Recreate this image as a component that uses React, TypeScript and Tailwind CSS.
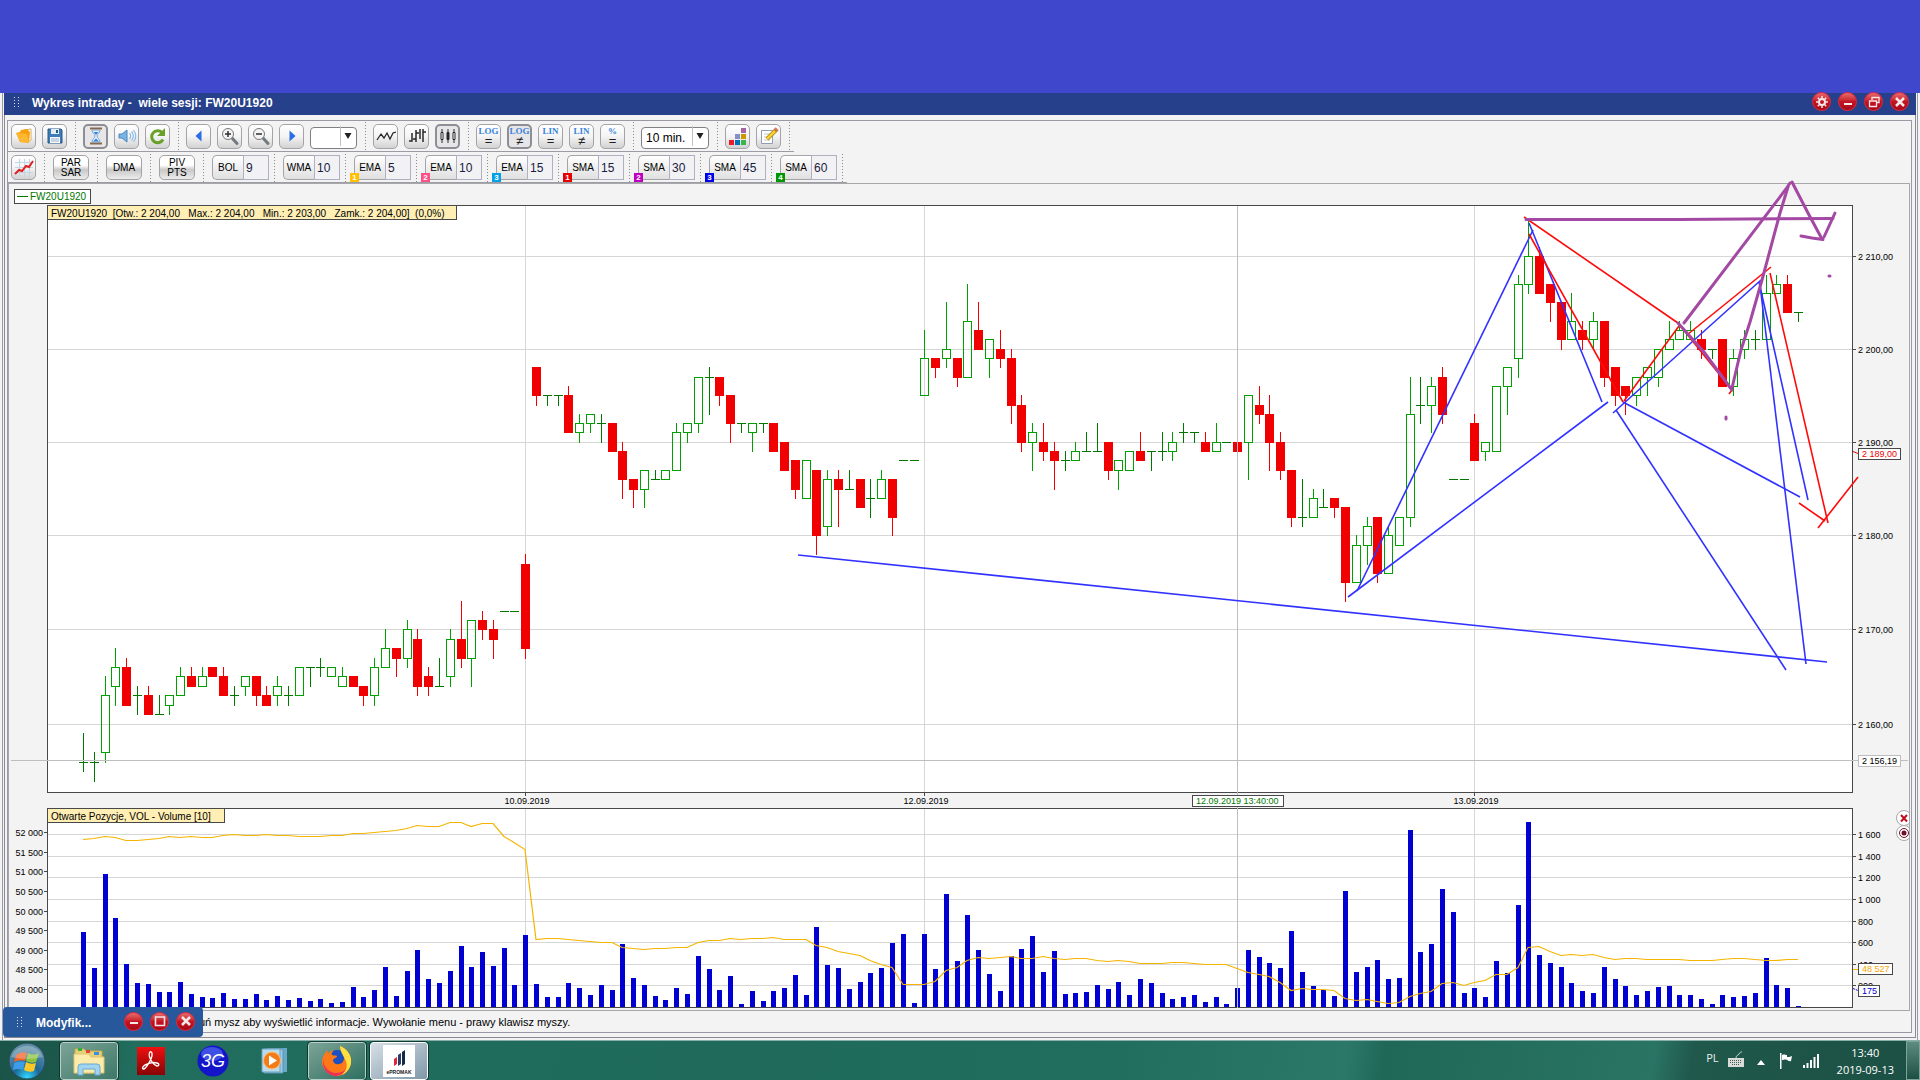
import type { ReactNode } from "react";

type Bar = [open: number, high: number, low: number, close: number];

// 10 minute bars, one entry per session slot
const bars: Bar[] = [
  [2156, 2159, 2155, 2156], [2156, 2157, 2154, 2156], [2157, 2165, 2156, 2163], [2164, 2168, 2162, 2166],
  [2166, 2167, 2162, 2162], [2163, 2164, 2161, 2163], [2163, 2164, 2161, 2161], [2161, 2163, 2161, 2161],
  [2162, 2163, 2161, 2163], [2163, 2166, 2163, 2165], [2165, 2166, 2164, 2164], [2164, 2166, 2164, 2165],
  [2166, 2166, 2165, 2165], [2165, 2166, 2163, 2163], [2163, 2164, 2162, 2163], [2164, 2165, 2163, 2165],
  [2165, 2165, 2162, 2163], [2163, 2164, 2162, 2162], [2163, 2165, 2162, 2164], [2163, 2164, 2162, 2163],
  [2163, 2166, 2163, 2166], [2166, 2166, 2164, 2166], [2166, 2167, 2165, 2166], [2165, 2166, 2165, 2166],
  [2164, 2166, 2164, 2165], [2165, 2165, 2164, 2164], [2164, 2164, 2162, 2163], [2163, 2167, 2162, 2166],
  [2166, 2170, 2166, 2168], [2168, 2168, 2165, 2167], [2167, 2171, 2166, 2170], [2169, 2170, 2163, 2164],
  [2165, 2166, 2163, 2164], [2164, 2167, 2164, 2164], [2165, 2170, 2164, 2169], [2169, 2173, 2166, 2167],
  [2167, 2171, 2164, 2171], [2171, 2172, 2169, 2170], [2170, 2171, 2167, 2169], [2172, 2172, 2172, 2172],
  [2172, 2172, 2172, 2172], [2177, 2178, 2167, 2168], [2198, 2198, 2194, 2195], [2195, 2195, 2194, 2195],
  [2195, 2195, 2194, 2195], [2195, 2196, 2191, 2191], [2191, 2193, 2190, 2192], [2192, 2193, 2191, 2193],
  [2192, 2193, 2190, 2192], [2192, 2192, 2189, 2189], [2189, 2190, 2184, 2186], [2186, 2186, 2183, 2185],
  [2185, 2187, 2183, 2187], [2186, 2187, 2186, 2186], [2186, 2187, 2186, 2187], [2187, 2192, 2187, 2191],
  [2191, 2192, 2190, 2192], [2192, 2197, 2191, 2197], [2197, 2198, 2193, 2197], [2197, 2197, 2194, 2195],
  [2195, 2195, 2190, 2192], [2192, 2192, 2191, 2192], [2191, 2192, 2189, 2192], [2192, 2192, 2191, 2192],
  [2192, 2192, 2189, 2189], [2190, 2190, 2187, 2187], [2188, 2188, 2184, 2185], [2184, 2188, 2184, 2188],
  [2187, 2187, 2178, 2180], [2181, 2187, 2180, 2186], [2186, 2187, 2181, 2185], [2185, 2187, 2185, 2185],
  [2186, 2186, 2183, 2183], [2184, 2186, 2182, 2184], [2184, 2187, 2184, 2186], [2186, 2186, 2180, 2182],
  [2188, 2188, 2188, 2188], [2188, 2188, 2188, 2188], [2195, 2202, 2195, 2199], [2199, 2199, 2197, 2198],
  [2199, 2205, 2198, 2200], [2199, 2199, 2196, 2197], [2197, 2207, 2197, 2203], [2202, 2205, 2200, 2200],
  [2199, 2201, 2197, 2201], [2200, 2202, 2198, 2199], [2199, 2200, 2192, 2194], [2194, 2195, 2189, 2190],
  [2190, 2192, 2187, 2191], [2190, 2192, 2188, 2189], [2189, 2190, 2185, 2188], [2188, 2189, 2187, 2188],
  [2188, 2190, 2188, 2189], [2189, 2191, 2189, 2189], [2189, 2192, 2189, 2189], [2190, 2190, 2186, 2187],
  [2187, 2188, 2185, 2188], [2187, 2189, 2187, 2189], [2189, 2191, 2188, 2188], [2189, 2189, 2187, 2189],
  [2189, 2191, 2188, 2189], [2189, 2191, 2188, 2190], [2191, 2192, 2190, 2191], [2191, 2191, 2190, 2191],
  [2190, 2191, 2189, 2189], [2189, 2192, 2189, 2190], [2190, 2190, 2190, 2190], [2190, 2190, 2189, 2189],
  [2190, 2195, 2186, 2195], [2194, 2196, 2192, 2193], [2193, 2195, 2187, 2190], [2190, 2191, 2186, 2187],
  [2187, 2187, 2181, 2182], [2182, 2186, 2181, 2182], [2182, 2185, 2182, 2184], [2183, 2185, 2183, 2183],
  [2184, 2184, 2182, 2183], [2183, 2183, 2173, 2175], [2175, 2180, 2175, 2179], [2179, 2182, 2177, 2181],
  [2182, 2182, 2175, 2176], [2176, 2181, 2176, 2180], [2179, 2182, 2179, 2182], [2182, 2197, 2181, 2193],
  [2194, 2197, 2192, 2194], [2194, 2197, 2191, 2196], [2197, 2198, 2192, 2193], [2186, 2186, 2186, 2186],
  [2186, 2186, 2186, 2186], [2192, 2193, 2188, 2188], [2189, 2190, 2188, 2190], [2189, 2196, 2189, 2196],
  [2196, 2198, 2193, 2198], [2199, 2208, 2197, 2207], [2207, 2214, 2206, 2210], [2210, 2211, 2206, 2206],
  [2207, 2207, 2203, 2205], [2205, 2205, 2200, 2201], [2201, 2206, 2201, 2203], [2202, 2203, 2200, 2201],
  [2201, 2204, 2200, 2203], [2203, 2203, 2196, 2197], [2198, 2198, 2194, 2195], [2196, 2196, 2193, 2195],
  [2195, 2197, 2194, 2197], [2197, 2198, 2195, 2198], [2197, 2200, 2196, 2200], [2200, 2203, 2200, 2201],
  [2201, 2203, 2201, 2202], [2201, 2203, 2201, 2202], [2201, 2202, 2199, 2200], [2200, 2200, 2199, 2200],
  [2201, 2201, 2196, 2196], [2196, 2200, 2195, 2199], [2200, 2202, 2199, 2201], [2201, 2202, 2200, 2201],
  [2201, 2208, 2201, 2206], [2206, 2208, 2206, 2207], [2207, 2208, 2204, 2204], [2204, 2204, 2203, 2204],
];

// bar heights in chart units
const volume = [
  75, 39, 133, 89, 43, 24, 23, 15, 15, 25, 13, 10, 9, 14, 8, 8, 13, 7, 11, 7, 9, 6, 8, 4, 5, 20, 10, 17, 40, 11, 36, 57,
  28, 24, 36, 61, 40, 55, 41, 59, 22, 72, 23, 10, 10, 24, 19, 12, 22, 17, 63, 29, 22, 11, 7, 19, 13, 51, 38, 17, 31, 3,
  16, 6, 16, 19, 32, 12, 80, 42, 39, 18, 25, 34, 39, 64, 73, 4, 73, 38, 113, 46, 92, 57, 33, 16, 51, 58, 71, 35, 56, 13,
  14, 15, 22, 18, 25, 12, 28, 24, 14, 8, 10, 12, 5, 10, 3, 19, 57, 50, 44, 39, 76, 35, 21, 17, 11, 116, 35, 40, 47, 28,
  29, 177, 55, 63, 118, 95, 14, 19, 10, 46, 34, 102, 185, 52, 44, 40, 24, 16, 14, 40, 28, 21, 12, 16, 20, 21, 12, 12, 8,
  3, 12, 10, 11, 14, 49, 22, 19, 1,
];

// open interest line, distance from the top of the lower plot
const openInterest = [
  30, 29, 27, 28, 31, 31, 30, 29, 27, 28, 27, 28, 28, 26, 25, 26, 26, 25, 26, 26, 27, 27, 27, 26, 26, 24, 24, 23, 22, 21,
  19, 16, 17, 17, 13, 13, 17, 14, 14, 27, 33, 40, 130, 129, 129, 130, 131, 132, 133, 133, 138, 139, 140, 139, 139, 138,
  138, 133, 131, 131, 129, 130, 129, 129, 128, 130, 130, 130, 136, 138, 142, 144, 146, 151, 155, 158, 175, 175, 175, 172,
  161, 158, 151, 148, 149, 148, 147, 149, 149, 147, 149, 150, 149, 149, 151, 152, 151, 152, 154, 154, 154, 153, 153, 154,
  155, 155, 155, 159, 163, 165, 167, 173, 181, 179, 180, 180, 181, 189, 191, 190, 192, 194, 193, 187, 184, 182, 174, 173,
  176, 173, 171, 165, 165, 158, 138, 137, 142, 146, 145, 146, 145, 148, 150, 149, 149, 150, 150, 150, 150, 151, 151, 151,
  150, 149, 149, 150, 151, 151, 150, 150,
];

const xOf = (i: number) => Math.round(83 + i * 10.786);
const yOf = (price: number) => Math.round(256 + 20440 * Math.log(2210 / price));

const priceTicks = [2210, 2200, 2190, 2180, 2170, 2160];
const volumeTicks: [string, number][] = [
  ["1 600", 834], ["1 400", 856], ["1 200", 877], ["1 000", 899], ["800", 921], ["600", 942], ["400", 964], ["200", 985],
];
const interestTicks: [string, number][] = [
  ["52 000", 832], ["51 500", 852], ["51 000", 871], ["50 500", 891], ["50 000", 911], ["49 500", 930], ["49 000", 950],
  ["48 500", 969], ["48 000", 989],
];
const days: [string, number][] = [["10.09.2019", 41], ["12.09.2019", 78], ["13.09.2019", 129]];

const blueLines = [
  "M798 555L1827 662", "M1348 597L1608 402", "M1357 591L1533 230", "M1529 223L1602 402", "M1613 413L1761 280",
  "M1623 402L1800 497", "M1616 410L1786 670", "M1759 282L1808 500", "M1760 285L1806 664",
];
const redLines = [
  "M1524 217L1678 323", "M1529 234L1623 402", "M1624 401L1679 326", "M1678 323L1732 390L1729 394", "M1687 335L1771 267",
  "M1770 273L1828 523", "M1799 503L1825 521", "M1818 528L1858 477",
];
const purpleLines = [
  "M1526 219.5H1678L1833 218.5", "M1684 323L1786 189L1790 183", "M1678 323L1704 352L1732 390",
  "M1732 388L1741 350L1750 322L1762 280L1780 213L1788 187", "M1792 182L1808 213L1822 239", "M1801 236L1812 238L1823 239.5",
  "M1824 237L1835 213",
];

function Candle({ i, bar }: { i: number; bar: Bar }) {
  const [open, high, low, close] = bar;
  const x = xOf(i);
  const top = yOf(Math.max(open, close));
  const bottom = yOf(Math.min(open, close));
  const color = open === close ? "#007800" : close > open ? "#00a000" : "#f00000";
  return (
    <g stroke={color}>
      {high > Math.max(open, close) && <path d={`M${x + 0.5} ${yOf(high)}V${top}`} />}
      {low < Math.min(open, close) && <path d={`M${x + 0.5} ${bottom}V${yOf(low) + 1}`} />}
      {open === close ? (
        <path d={`M${x - 4} ${top + 0.5}h9`} />
      ) : (
        <rect x={x - 3.5} y={top + 0.5} width={8} height={bottom - top} fill={close > open ? "none" : color} />
      )}
    </g>
  );
}

function Tag({ x, y, w, h = 12, text, color = "#000", border = "#484848", fill = "#fff", size = "text-[9px]" }: {
  x: number; y: number; w: number; h?: number; text: string; color?: string; border?: string; fill?: string; size?: string;
}) {
  return (
    <g>
      <rect x={x + 0.5} y={y + 0.5} width={w - 1} height={h - 1} fill={fill} stroke={border} />
      <text x={x + 4} y={y + h - 3} fill={color} className={size}>{text}</text>
    </g>
  );
}

function Chart() {
  const cross = xOf(107);
  return (
    <svg
      viewBox="9 184 1900 826"
      className="block w-full h-auto overflow-visible text-[9px]"
      fill="#000"
      role="img"
      aria-label="FW20U1920"
    >
      <g shapeRendering="crispEdges" fill="none">
        <rect x="47.5" y="205.5" width="1805" height="587" fill="#fff" stroke="#484848" />
        <rect x="47.5" y="808.5" width="1805" height="199" fill="#fff" stroke="#484848" />
        <g stroke="#d6d6d6">
          {priceTicks.map((p) => <path key={p} d={`M48 ${yOf(p) + 0.5}H1852`} />)}
          {volumeTicks.map(([t, y]) => <path key={t} d={`M48 ${y + 0.5}H1852`} />)}
          {days.map(([t, i]) => <path key={t} d={`M${xOf(i) + 0.5} 206V792M${xOf(i) + 0.5} 809V1007`} />)}
        </g>
        <g stroke="#484848">
          {priceTicks.map((p) => <path key={p} d={`M1853 ${yOf(p) + 0.5}h3`} />)}
          {volumeTicks.map(([t, y]) => <path key={t} d={`M1853 ${y + 0.5}h3`} />)}
          {interestTicks.map(([t, y]) => <path key={t} d={`M44 ${y + 0.5}h3`} />)}
          {days.map(([t, i]) => <path key={t} d={`M${xOf(i) + 0.5} 793v3`} />)}
        </g>
        {bars.map((bar, i) => <Candle key={i} i={i} bar={bar} />)}
        {volume.map((v, i) => <rect key={i} x={xOf(i) - 2} y={1007 - v} width={5} height={v} fill="#0000d2" />)}
        <path d={`M11 760.5H1908M${cross + 0.5} 206V1008`} stroke="#bebebe" />
      </g>

      <polyline
        points={openInterest.map((v, i) => `${xOf(i)},${809.5 + v}`).join(" ")}
        fill="none"
        stroke="#f5b400"
        strokeWidth="1.2"
      />

      {priceTicks.map((p) => (
        <text key={p} x="1858" y={yOf(p) + 4}>{`2 ${p - 2000},00`}</text>
      ))}
      {volumeTicks.map(([t, y]) => <text key={t} x="1858" y={y + 4}>{t}</text>)}
      {interestTicks.map(([t, y]) => <text key={t} x="43" y={y + 4} textAnchor="end">{t}</text>)}
      {days.map(([t, i]) => <text key={t} x={xOf(i) + 2} y="804" textAnchor="middle">{t}</text>)}

      <Tag x={14} y={189} w={77} h={15} text="" />
      <path d="M17 196.5h11" stroke="#007800" />
      <text x="30" y="200" fill="#007800" className="text-[10px]">FW20U1920</text>
      <Tag
        x={47} y={205} w={410} h={15} fill="#ffefb5" size="text-[10px]"
        text={"FW20U1920 \u00a0[Otw.: 2 204,00 \u00a0 Max.: 2 204,00 \u00a0 Min.: 2 203,00 \u00a0 Zamk.: 2 204,00] \u00a0(0,0%)"}
      />
      <Tag x={47} y={808} w={178} h={15} fill="#ffefb5" size="text-[10px]" text="Otwarte Pozycje, VOL - Volume [10]" />
      <Tag x={1192} y={795} w={92} text="12.09.2019 13:40:00" color="#007800" />
      <path d="M1853 451.5l5 2" stroke="#f00000" />
      <Tag x={1858} y={448} w={43} text="2 189,00" color="#f00000" />
      <Tag x={1858} y={755} w={43} text="2 156,19" border="#bebebe" />
      <path d="M1853 969.5h5" stroke="#f5b400" />
      <Tag x={1858} y={963} w={35} text="48 527" color="#f5a800" />
      <path d="M1853 988.5l5 2" stroke="#0000d2" strokeDasharray="2 1" />
      <Tag x={1858} y={985} w={22} text="175" color="#0000d2" />

      <g fill="none" stroke="#3232ff" strokeWidth="1.6">{blueLines.map((d) => <path key={d} d={d} />)}</g>
      <g fill="none" stroke="#ff0a0a" strokeWidth="1.6">{redLines.map((d) => <path key={d} d={d} />)}</g>
      <g fill="none" stroke="#a349a4" strokeWidth="3" strokeLinecap="round">
        {purpleLines.map((d) => <path key={d} d={d} />)}
        <path d="M1829 276h1M1726 417v2" />
      </g>

      <svg x="1895" y="809" width="14" height="34" viewBox="0 0 14 34">
        <circle cx="9" cy="9" r="7.500" fill="#fff" stroke="#a8a8a8" />
        <path d="M6 6l6 6.500M12 6l-6 6.500" stroke="#c01020" strokeWidth="2" />
        <circle cx="9" cy="24" r="7.500" fill="#fff" stroke="#a8a8a8" />
        <circle cx="9" cy="24" r="4.500" fill="none" stroke="#701028" />
        <circle cx="9" cy="24" r="2.500" fill="#701028" />
      </svg>
    </svg>
  );
}

function RoundButton({ label, children }: { label: string; children: ReactNode }) {
  return (
    <button
      aria-label={label}
      className="grid size-[19px] place-items-center rounded-full border border-[#e02838] bg-linear-to-b from-[#e8686e] via-[#c41424] to-[#a80818]"
    >
      <svg viewBox="0 0 12 12" className="size-3" fill="none" stroke="#f4e8e8" strokeWidth="2">{children}</svg>
    </button>
  );
}

function Grip() {
  return (
    <svg width="5" height="11" viewBox="0 0 5 11" shapeRendering="crispEdges">
      <path d="M.5 0v11M4.500 0v11" stroke="#d8def0" strokeDasharray="1 2" />
    </svg>
  );
}

function Tool({ label, pressed, children }: { label: string; pressed?: boolean; children: ReactNode }) {
  return (
    <button
      aria-label={label}
      aria-pressed={pressed}
      className={
        pressed
          ? "grid size-[25px] place-items-center rounded-[5px] border-2 border-[#8e8e94] bg-[#e6e6e8]"
          : "grid size-[25px] place-items-center rounded-[5px] border border-[#a4a4a8] bg-linear-to-b from-white via-[#f4f4f4] to-[#d2d2d2]"
      }
    >
      <svg viewBox="0 0 20 20" className="size-5" fill="none">{children}</svg>
    </button>
  );
}

function Scale({ label, sign, pressed }: { label: string; sign: string; pressed?: boolean }) {
  return (
    <button
      aria-pressed={pressed}
      className={
        pressed
          ? "flex size-[25px] flex-col items-center justify-center rounded-[5px] border-2 border-[#8e8e94] bg-[#e6e6e8] leading-[9px]"
          : "flex size-[25px] flex-col items-center justify-center rounded-[5px] border border-[#a4a4a8] bg-linear-to-b from-white via-[#f4f4f4] to-[#d2d2d2] leading-[9px]"
      }
    >
      <span className="font-['Liberation_Serif',serif] text-[9px] font-bold text-[#3c84dc]">{label}</span>
      <span className="text-[13px] text-[#202020]">{sign}</span>
    </button>
  );
}

const Sep = () => (
  <div className="h-7 w-px bg-[repeating-linear-gradient(to_bottom,#8c8c90_0_1px,transparent_1px_3px)]" />
);

function Group({ children }: { children: ReactNode }) {
  return (
    <>
      <div className="flex items-center gap-[6px] pl-[7px] pr-2">{children}</div>
      <Sep />
    </>
  );
}

function Wide({ lines }: { lines: string[] }) {
  return (
    <>
      <div className="px-2">
        <button className="flex h-[25px] w-9 flex-col items-center justify-center rounded-[5px] border border-[#a4a4a8] bg-linear-to-b from-white from-40% via-[#c8c8c8] via-60% to-[#ececec] text-[10px] leading-[10px]">
          {lines.map((l) => <span key={l}>{l}</span>)}
        </button>
      </div>
      <Sep />
    </>
  );
}

const averages = [
  { id: "bol", label: "BOL", value: "9", badge: "", color: "" },
  { id: "wma", label: "WMA", value: "10", badge: "", color: "" },
  { id: "ema1", label: "EMA", value: "5", badge: "1", color: "bg-[#ffc000]" },
  { id: "ema2", label: "EMA", value: "10", badge: "2", color: "bg-[#ff5088]" },
  { id: "ema3", label: "EMA", value: "15", badge: "3", color: "bg-[#00a0e8]" },
  { id: "sma1", label: "SMA", value: "15", badge: "1", color: "bg-[#e80000]" },
  { id: "sma2", label: "SMA", value: "30", badge: "2", color: "bg-[#c000c0]" },
  { id: "sma3", label: "SMA", value: "45", badge: "3", color: "bg-[#0000e8]" },
  { id: "sma4", label: "SMA", value: "60", badge: "4", color: "bg-[#009600]" },
];

function Toolbars() {
  return (
    <div className="text-black">
      <div className="flex h-[31px] w-fit items-center border-b border-[#9c9ca4] pr-1">
        <div className="-ml-1 flex items-center">
          <Group>
            <Tool label="Open">
              <path d="M10 4l7-1v11l-4 3z" fill="#fff" stroke="#d8b060" />
              <path d="M2 7l4-1 1-2 6-1 3 3-1 11-9-1z" fill="#f8a010" />
              <path d="M2 7l11 1 2 9-8-1z" fill="#ffb830" />
            </Tool>
            <Tool label="Save">
              <path d="M3 3h13l1 1v13H3z" fill="#3c7cb8" stroke="#285888" />
              <path d="M6 3h8v5H6z" fill="#e4ecf4" />
              <path d="M11 4h2v3h-2z" fill="#285888" />
              <path d="M5 11h10v6H5z" fill="#f4f8fc" />
              <path d="M6 13h8M6 15h8" stroke="#9cb4cc" />
            </Tool>
          </Group>
          <Group>
            <Tool label="Intraday" pressed>
              <path d="M4 2.500h12M4 17.500h12" stroke="#8c6848" strokeWidth="2" />
              <path d="M6 4h8c0 3-3 4-3 6s3 3 3 6H6c0-3 3-4 3-6S6 7 6 4z" fill="#e0f0ff" stroke="#78a8d8" />
              <path d="M7.500 6h5L10 9zM7 15.500l3-3 3 3z" fill="#3c84d8" />
            </Tool>
            <Tool label="Sound">
              <path d="M2 8h3l5-4v12l-5-4H2z" fill="#78b4e4" stroke="#4888c0" />
              <path d="M12.500 7c1.500 2 1.500 4 0 6M14.500 5.500c2.500 3 2.500 6 0 9M16.500 4c3 4 3 8 0 12" stroke="#88bce8" strokeWidth="1.2" />
            </Tool>
            <Tool label="Refresh">
              <path d="M15 13.500a6 6 0 1 1-1-7" stroke="#68a028" strokeWidth="3" />
              <path d="M17 2v8h-8z" fill="#68a028" />
            </Tool>
          </Group>
          <Group>
            <Tool label="Previous"><path d="M12.500 4.500v11l-6-5.500z" fill="#2c6ce4" /></Tool>
            <Tool label="Zoom in">
              <path d="M12 12l5 5.500" stroke="#707880" strokeWidth="3" strokeLinecap="round" />
              <circle cx="8" cy="8" r="5.500" fill="#f4f4f4" stroke="#787878" />
              <path d="M5 8h6M8 5v6" stroke="#303030" strokeWidth="1.500" />
            </Tool>
            <Tool label="Zoom out">
              <path d="M12 12l5 5.500" stroke="#707880" strokeWidth="3" strokeLinecap="round" />
              <circle cx="8" cy="8" r="5.500" fill="#f4f4f4" stroke="#787878" />
              <path d="M5 8h6" stroke="#303030" strokeWidth="1.500" />
            </Tool>
            <Tool label="Next"><path d="M7.500 4.500v11l6-5.500z" fill="#2c6ce4" /></Tool>
            <Picker label="Range" value="" className="w-[47px]" />
          </Group>
          <Group>
            <Tool label="Line chart"><path d="M1 14l4-6 3 4 3-5 3 6 3-6 3-1" stroke="#282828" strokeWidth="1.300" /></Tool>
            <Tool label="Bar chart">
              <path d="M2 15h3V7M9 4v12M6 13h3M9 7h3M13 3v10M16 3v13M16 6h3" stroke="#282828" strokeWidth="1.500" />
            </Tool>
            <Tool label="Candle chart" pressed>
              <path d="M4 3v14M10 3v14M16 3v14" stroke="#282828" />
              <path d="M3 6.500h2v7H3zM15 6.500h2v7h-2z" fill="#fff" stroke="#282828" />
              <path d="M9 6.500h2v7H9z" fill="#282828" stroke="#282828" />
            </Tool>
          </Group>
          <Group>
            <Scale label="LOG" sign="=" />
            <Scale label="LOG" sign="≠" pressed />
            <Scale label="LIN" sign="=" />
            <Scale label="LIN" sign="≠" />
            <Scale label="%" sign="=" />
          </Group>
          <Group><Picker label="Interval" value="10 min." className="w-[68px]" /></Group>
          <Group>
            <Tool label="Colors">
              <g shapeRendering="crispEdges">
                <path d="M1 14h5v5H1z" fill="#ed1c24" />
                <path d="M7 14h5v5H7z" fill="#0072bc" />
                <path d="M13 14h5v5h-5z" fill="#39b54a" />
                <path d="M7 8h5v5H7z" fill="#8393ca" />
                <path d="M13 8h5v5h-5z" fill="#cc9900" />
                <path d="M13 2h5v5h-5z" fill="#a864a8" />
              </g>
            </Tool>
            <Tool label="Edit">
              <path d="M2.500 4.500h11v13h-11z" fill="#fff" stroke="#909cb0" />
              <path d="M5 8h6M5 11h5M5 14h6" stroke="#c0c8d4" />
              <path d="M8 13L17 4" stroke="#a88010" strokeWidth="4" />
              <path d="M8 13L16 5" stroke="#f8d030" strokeWidth="2.500" />
              <path d="M16 2l3 3" stroke="#e07060" strokeWidth="2" />
            </Tool>
          </Group>
        </div>
      </div>
      <div className="flex h-8 w-fit items-center border-b-2 border-[#9c9ca4] pt-px pr-1">
        <div className="-ml-1 flex items-center">
          <Group>
            <Tool label="Indicators">
              <path d="M1 4.500h18M1 9.500h18M1 14.500h18M5.500 1v18M10.500 1v18M15.500 1v18" stroke="#c4d4e8" />
              <path d="M1 16l4-4 3 1 4-5 3 1 4-6" stroke="#e02020" strokeWidth="2" />
            </Tool>
          </Group>
          <Wide lines={["PAR", "SAR"]} />
          <Wide lines={["DMA"]} />
          <Wide lines={["PIV", "PTS"]} />
          {averages.map((a) => (
            <div key={a.id} className="flex items-center">
              <div className="relative flex pl-2 pr-[5px]">
                <button
                  id={`${a.id}-label`}
                  className="h-[25px] w-[31px] rounded-l-[5px] border border-r-0 border-[#a4a4a8] bg-linear-to-b from-white to-[#e0e0e0] text-[10px]"
                >
                  {a.label}
                </button>
                <input
                  aria-labelledby={`${a.id}-label`}
                  defaultValue={a.value}
                  className="h-[25px] w-[26px] border border-[#b0b0c4] bg-[#f2f2f4] pl-[2px] text-[12px] text-[#182040]"
                />
                {a.badge && (
                  <span className={`absolute bottom-[-2px] left-1 grid h-[9px] w-[9px] place-items-center text-[8px] leading-[9px] font-bold text-white ${a.color}`}>
                    {a.badge}
                  </span>
                )}
              </div>
              <Sep />
            </div>
          ))}
        </div>
      </div>
    </div>
  );
}

function Picker({ label, value, className }: { label: string; value: string; className: string }) {
  return (
    <div className={`relative h-[22px] ${className}`}>
      <select
        aria-label={label}
        defaultValue={value}
        className="size-full appearance-none rounded-[4px] border border-[#808084] bg-white pl-1 text-[12px]"
      >
        <option value={value}>{value}</option>
      </select>
      <svg viewBox="0 0 16 20" className="pointer-events-none absolute top-px right-px h-5 w-4">
        <path d="M.5 0v20" stroke="#c4c4c8" />
        <path d="M4.500 7h7l-3.500 6z" fill="#202020" />
      </svg>
    </div>
  );
}

function Taskbar() {
  return (
    <footer className="flex h-10 items-center border-t border-[#88b0a8] bg-[linear-gradient(100deg,#1a5448_0%,#1c5a4c_4%,#216e5e_7%,#1f6a5a_40%,#216e5e_58%,#2c7868_70%,#1f6858_72%,#2a7464_86%,#20584c_88%,#1c5044_100%)] font-['Open_Sans',sans-serif] text-white">
      <button aria-label="Start" className="ml-2 size-[38px]">
        <svg viewBox="0 0 38 38">
          <defs>
            <radialGradient id="orb" cx="50%" cy="95%" r="80%">
              <stop offset="0" stopColor="#30d8ff" />
              <stop offset=".45" stopColor="#1c6898" />
              <stop offset="1" stopColor="#5c8ca4" />
            </radialGradient>
          </defs>
          <circle cx="19" cy="19" r="18" fill="url(#orb)" stroke="#284858" />
          <path d="M8 13q5-4 11-2l-2 8q-5-2-11 1z" fill="#f06428" />
          <path d="M20 11q5 3 11 0l-3 9q-5 2-10-1z" fill="#8cc43c" />
          <path d="M6 21q5-3 11-1l-2 8q-5-2-10 0z" fill="#3c9ce8" />
          <path d="M18 20q5 3 10 1l-2 8q-5 2-10-1z" fill="#fcc828" />
          <path d="M3 15a17 17 0 0 1 32 0q-16 4-32 0z" fill="#fff" opacity=".25" />
        </svg>
      </button>
      <button aria-label="Explorer" className="ml-[14px] grid h-[38px] w-[58px] place-items-center rounded-[3px] border border-[#b8d0c8] bg-linear-to-br from-[#7ca498] to-[#3c7868] outline outline-[#103830]">
        <svg viewBox="0 0 34 32" className="h-8 w-[34px]">
          <path d="M3 4h9l2 2h16v22H3z" fill="#e8d078" stroke="#c8a848" />
          <path d="M6 3h4v3H6z" fill="#30b040" />
          <path d="M14 5h4v3h-4z" fill="#e04830" />
          <path d="M22 7h5v3h-5z" fill="#3890e0" />
          <path d="M2 9h15l2 3h13v16H2z" fill="#fcecac" stroke="#e0c470" />
          <path d="M6 30v-8q0-3 3-3h16q3 0 3 3v8h-5v-6H11v6z" fill="#a0d4f0" stroke="#68a8d0" />
        </svg>
      </button>
      <button aria-label="Acrobat" className="ml-[19px] grid h-7 w-7 place-items-center bg-linear-to-b from-[#f01010] to-[#880404]">
        <svg viewBox="0 0 24 24" className="size-6" fill="none" stroke="#fff" strokeWidth="1.400">
          <path d="M11 3c2-1 3 2 1 7-2 4-5 9-7 10-2 0-2-2 1-4 4-2 9-3 12-2 3 1 2 3 0 3-3-1-6-5-7-8-1-2-1-5 0-6z" />
        </svg>
      </button>
      <button aria-label="3G" className="ml-8 size-8">
        <svg viewBox="0 0 32 32">
          <circle cx="16" cy="16" r="15.500" fill="#1414c8" />
          <ellipse cx="15" cy="9" rx="11" ry="7" fill="#5c78f8" opacity=".6" />
          <text x="16" y="22" textAnchor="middle" fill="#fff" className="font-['Liberation_Sans',sans-serif] text-[18px] italic">3G</text>
        </svg>
      </button>
      <button aria-label="Media player" className="ml-8 size-[27px]">
        <svg viewBox="0 0 27 27">
          <path d="M6 1h20v24H6z" fill="#68a8c8" />
          <path d="M3 2h19v24H3z" fill="#9ccce4" stroke="#5894b4" />
          <path d="M1 2h18v23H1z" fill="#b8dcec" stroke="#68a0bc" />
          <circle cx="11" cy="13.500" r="8.500" fill="#f47c18" stroke="#fcc080" />
          <path d="M8 8.500l8 5-8 5z" fill="#fff" />
        </svg>
      </button>
      <button aria-label="Firefox" className="ml-5 grid h-[38px] w-[58px] place-items-center rounded-[3px] border border-[#b8d0c8] bg-linear-to-br from-[#7ca498] to-[#2c7060] outline outline-[#103830]">
        <svg viewBox="0 0 32 32" className="size-8">
          <circle cx="16" cy="16" r="11" fill="#1c50c0" />
          <path d="M19 1c7 3 12 9 11 17-1 7-7 13-14 13S2 25 1 18C1 12 4 8 6 5l1 4c2-3 4-4 6-4-2 2-3 4-2 5 2 1 4 0 5 1 0 2-3 2-4 4 0 3 3 5 6 4 3 0 5-3 5-6 0-5-3-7-4-12z" fill="#ff7818" />
          <path d="M19 1c7 3 12 9 11 17-1 6-5 10-9 12 5-5 6-10 3-16-2-4-5-8-5-13z" fill="#ffe040" />
          <path d="M2 13c0 8 5 14 12 15 4 0 8-1 11-4-3 5-7 7-11 7C7 30 1 25 2 13z" fill="#f03058" />
        </svg>
      </button>
      <button aria-label="ePROMAK" className="ml-1 grid h-[38px] w-[58px] place-items-center rounded-[3px] border border-white bg-linear-to-br from-[#d8e0e8] to-[#8098a8] outline outline-[#103830]">
        <svg viewBox="0 0 32 32" className="size-8">
          <path d="M0 0h32v32H0z" fill="#fff" />
          <path d="M11 14l3-2v7l-3 2z" fill="#e02838" />
          <path d="M15 10l3-2v11l-3 2z" fill="#283c68" />
          <path d="M19 7l3-2v14l-3 2z" fill="#182848" />
          <text x="16" y="29" textAnchor="middle" fill="#202020" className="font-['Liberation_Sans',sans-serif] text-[5px] font-bold">ePROMAK</text>
        </svg>
      </button>
      <div className="ml-auto flex h-full items-center">
        <span className="-mt-1 text-[11px] text-[#e8f0ec]">PL</span>
        <svg viewBox="0 0 18 18" className="-mt-1 ml-2 size-[18px]" fill="none">
          <path d="M9 8c0-3 2-2 3-4s2-2 3-2" stroke="#d0d8d4" />
          <path d="M1 8h16v9H1z" fill="#d8dcd8" />
          <path d="M3 10.500h12M3 12.500h12M5 14.500h8" stroke="#485850" strokeDasharray="1 1" />
        </svg>
        <svg viewBox="0 0 8 5" className="mt-1 ml-3 h-[5px] w-2"><path d="M0 5l4-5 4 5z" fill="#fff" /></svg>
        <svg viewBox="0 0 16 18" className="ml-[14px] h-[18px] w-4">
          <path d="M1 1h1.500v16H1z" fill="#fff" />
          <path d="M3 3c3-1 3 0 5 0v2c2 0 3 0 5-1l-1 5c-2 1-3-1-4-1-2-1-3 0-5 0z" fill="#fff" />
        </svg>
        <svg viewBox="0 0 16 14" className="ml-2 h-[14px] w-4">
          <path d="M0 11h2v3H0zM3.500 9h2v5h-2zM7 6h2v8H7zM10.500 3h2v11h-2zM14 0h2v14h-2z" fill="#fff" />
        </svg>
        <div className="ml-[18px] text-center text-[11px] leading-[17px]">
          <div>13:40</div>
          <div>2019-09-13</div>
        </div>
        <button aria-label="Show desktop" className="ml-3 h-full w-[14px] border border-[#7ca498] bg-linear-to-b from-[#5c8c80] to-[#1c5044]" />
      </div>
    </footer>
  );
}

export default function App() {
  return (
    <div className="flex min-h-screen flex-col bg-[#f3f3f3] font-['Liberation_Sans',Arial,sans-serif] text-black">
      <div className="h-[93px] bg-[#3f48cc]" />
      <main className="relative mx-[2px] flex-1 border-x border-[#9a9aa6] px-px">
        <header className="flex h-[22px] items-center bg-[#27408b] pr-[7px] pb-[3px] pl-[10px] text-white">
          <Grip />
          <h1 className="ml-[13px] text-[12px] font-bold whitespace-pre">Wykres intraday -  wiele sesji: FW20U1920</h1>
          <div className="ml-auto flex -translate-y-px gap-[7px]">
            <RoundButton label="Settings">
              <circle cx="6" cy="6" r="3" />
              <path d="M6 0v2M6 10v2M0 6h2M10 6h2M1.800 1.800l1.400 1.400M8.800 8.800l1.400 1.400M1.800 10.200l1.400-1.400M8.800 3.200l1.400-1.400" strokeWidth="1.500" />
            </RoundButton>
            <RoundButton label="Minimize"><path d="M2 8h8" /></RoundButton>
            <RoundButton label="Restore">
              <path d="M4 4V1.500h7v5H9M1.500 5h7v5.500h-7z" strokeWidth="1.300" />
            </RoundButton>
            <RoundButton label="Close"><path d="M2 2l8 8M10 2l-8 8" strokeWidth="2.500" /></RoundButton>
          </div>
        </header>
        <div className="border-x border-b border-[#8a8a94] pt-[5px] pr-[3px] pb-1 pl-0.5">
          <div className="border border-[#9a9aa6]">
            <Toolbars />
            <section className="-mt-px mr-px border border-[#a8a8ac]">
              <Chart />
            </section>
            <p className="pt-px pl-[191px] text-[11px] leading-5">
              uń mysz aby wyświetlić informacje. Wywołanie menu - prawy klawisz myszy.
            </p>
          </div>
        </div>
        <div className="absolute bottom-[3px] left-0 flex h-[30px] w-[200px] items-center rounded-[4px] bg-[#27589c] pr-2 pl-[14px] text-white">
          <Grip />
          <span className="ml-[14px] pt-px text-[12px] font-bold">Modyfik...</span>
          <div className="ml-auto flex -translate-y-px gap-[7px]">
            <RoundButton label="Minimize"><path d="M2 8h8" /></RoundButton>
            <RoundButton label="Maximize"><path d="M1.500 2h9v8.500h-9z" strokeWidth="1.600" /></RoundButton>
            <RoundButton label="Close"><path d="M2 2l8 8M10 2l-8 8" strokeWidth="2.500" /></RoundButton>
          </div>
        </div>
      </main>
      <Taskbar />
    </div>
  );
}
